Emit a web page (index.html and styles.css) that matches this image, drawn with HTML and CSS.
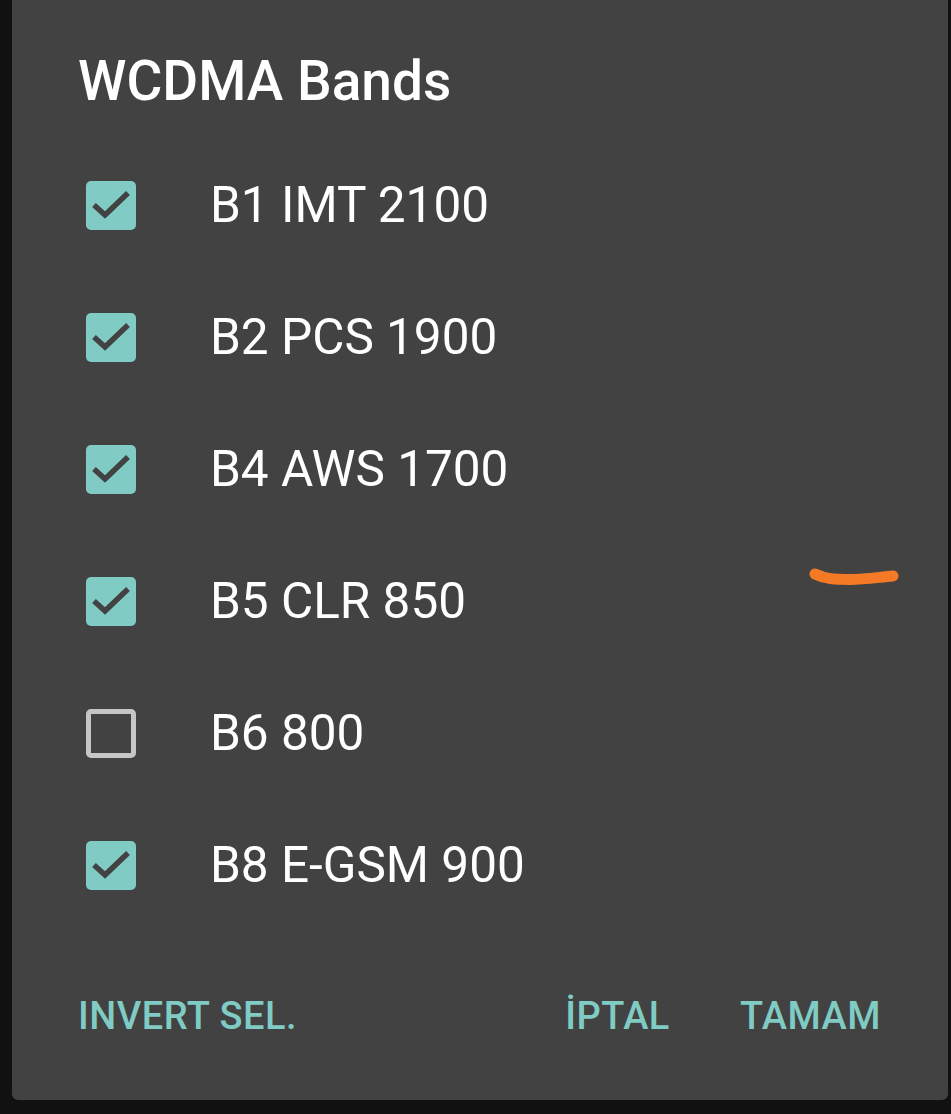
FILE: index.html
```html
<!DOCTYPE html>
<html lang="tr">
<head>
  <meta charset="UTF-8">
  <title>WCDMA Bands</title>
  <link rel="stylesheet" href="styles.css">
</head>
<body>

<div class="dialog">
  <h2 class="title">WCDMA Bands</h2>

  <ul class="bands">
    <li class="band">
      <span class="box checked"><svg viewBox="0 0 50 49"><path d="M8 24 L19 34 L42 12"/></svg></span>
      <span class="label">B1 IMT 2100</span>
    </li>
    <li class="band">
      <span class="box checked"><svg viewBox="0 0 50 49"><path d="M8 24 L19 34 L42 12"/></svg></span>
      <span class="label">B2 PCS 1900</span>
    </li>
    <li class="band">
      <span class="box checked"><svg viewBox="0 0 50 49"><path d="M8 24 L19 34 L42 12"/></svg></span>
      <span class="label">B4 AWS 1700</span>
    </li>
    <li class="band">
      <span class="box checked"><svg viewBox="0 0 50 49"><path d="M8 24 L19 34 L42 12"/></svg></span>
      <span class="label">B5 CLR 850</span>
    </li>
    <li class="band">
      <span class="box"></span>
      <span class="label">B6 800</span>
    </li>
    <li class="band">
      <span class="box checked"><svg viewBox="0 0 50 49"><path d="M8 24 L19 34 L42 12"/></svg></span>
      <span class="label">B8 E-GSM 900</span>
    </li>
  </ul>

  <div class="actions">
    <button class="action">INVERT SEL.</button>
    <span class="spacer"></span>
    <button class="action">İPTAL</button>
    <button class="action">TAMAM</button>
  </div>

  <!-- hand drawn mark on the screenshot -->
  <svg class="scribble" viewBox="0 0 110 30">
    <path d="M10 13 C 20 18, 30 18.5, 45 18.5 S 75 16, 88 15"/>
  </svg>
</div>

</body>
</html>
```

FILE: styles.css
```css
body {
  margin: 0;
  background: #111111;
  font-family: Roboto, "Liberation Sans", sans-serif;
}

.dialog {
  position: relative;
  margin-left: 12px;
  width: 936px;
  height: 1100px;
  box-sizing: border-box;
  padding-top: 49px;
  background: #424242;
  border-radius: 0 0 6px 6px;
}

.title {
  margin: 0 0 26px 66px;
  font-size: 55px;
  line-height: 64px;
  font-weight: 500;
  color: #ffffff;
}

.bands {
  list-style: none;
  margin: 0;
  padding: 0;
}

.band {
  display: flex;
  align-items: center;
  height: 132px;
}

.box {
  display: block;
  width: 50px;
  height: 49px;
  margin-left: 74px;
  margin-right: 74px;
  box-sizing: border-box;
  border: 5px solid #c6c6c6;
  border-radius: 5px;
}

.box.checked {
  border: none;
  background: #80cbc4;
}

.box svg {
  display: block;
  width: 50px;
  height: 49px;
}

.box path {
  fill: none;
  stroke: #424242;
  stroke-width: 5.5;
}

.label {
  font-size: 49.5px;
  line-height: 60px;
  color: #ffffff;
}

.actions {
  display: flex;
  align-items: center;
  gap: 70px;
  margin-top: 61px;
  padding: 0 67px 0 66px;
}

.spacer {
  flex: 1;
}

.action {
  padding: 0;
  border: none;
  background: none;
  font-family: Roboto, "Liberation Sans", sans-serif;
  font-size: 38px;
  line-height: 48px;
  font-weight: 500;
  letter-spacing: 0.5px;
  color: #80cbc4;
}

.scribble {
  position: absolute;
  left: 793px;
  top: 561px;
  width: 110px;
  height: 30px;
}

.scribble path {
  fill: none;
  stroke: #f47a25;
  stroke-width: 11;
  stroke-linecap: round;
}
```
